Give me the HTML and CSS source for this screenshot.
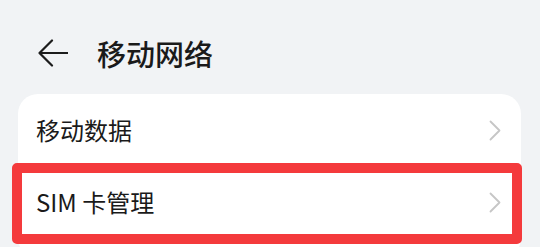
FILE: index.html
```html
<!DOCTYPE html>
<html lang="zh-CN">
<head>
  <meta charset="UTF-8">
  <meta name="viewport" content="width=device-width, initial-scale=1.0">
  <title>移动网络</title>
  <link rel="stylesheet" href="styles.css">
</head>
<body>
  <div class="header">
    <svg class="back" width="30" height="28" viewBox="0 0 30 28">
      <path d="M14 1.5 L1.5 14 L14 26.5 M1.5 14 H29.5" fill="none" stroke="#1c1c1c" stroke-width="2.2" stroke-linecap="round" stroke-linejoin="round"/>
    </svg>
    <h1 class="title">移动网络</h1>
  </div>

  <div class="card">
    <div class="row">
      <span class="label">移动数据</span>
      <svg class="chevron" width="12" height="21" viewBox="0 0 12 21">
        <path d="M1.5 1.5 L10.5 10.5 L1.5 19.5" fill="none" stroke="#c6c6c6" stroke-width="1.8" stroke-linecap="round" stroke-linejoin="round"/>
      </svg>
    </div>
    <div class="row">
      <span class="label">SIM 卡管理</span>
      <svg class="chevron" width="12" height="21" viewBox="0 0 12 21">
        <path d="M1.5 1.5 L10.5 10.5 L1.5 19.5" fill="none" stroke="#c6c6c6" stroke-width="1.8" stroke-linecap="round" stroke-linejoin="round"/>
      </svg>
      <div class="highlight"></div>
    </div>
  </div>
</body>
</html>
```

FILE: styles.css
```css
body {
  margin: 0;
  padding: 0;
  background-color: #f1f3f5;
  font-family: "Noto Sans CJK SC", "Noto Sans", sans-serif;
  color: #1a1a1a;
  overflow: hidden;
}

.header {
  display: flex;
  align-items: center;
  height: 82px;
  padding: 12px 0 0 38px;
}

.back {
  display: block;
  margin-right: 29px;
}

.title {
  margin: 0;
  font-size: 29px;
  font-weight: 500;
  line-height: 1;
}

.card {
  margin: 0 19px 0 18px;
  background-color: #ffffff;
  border-radius: 20px;
  padding-bottom: 20px;
}

.row {
  position: relative;
  display: flex;
  align-items: center;
  justify-content: space-between;
  height: 72px;
  padding: 0 20px 0 18px;
}

.label {
  font-size: 24px;
  line-height: 1;
}

.chevron {
  display: block;
}

/* red frame drawn over the SIM row */
.highlight {
  position: absolute;
  top: -3px;
  left: -6px;
  right: -1px;
  bottom: -6px;
  border: 10px solid #f43a3c;
  border-radius: 5px;
}
```
